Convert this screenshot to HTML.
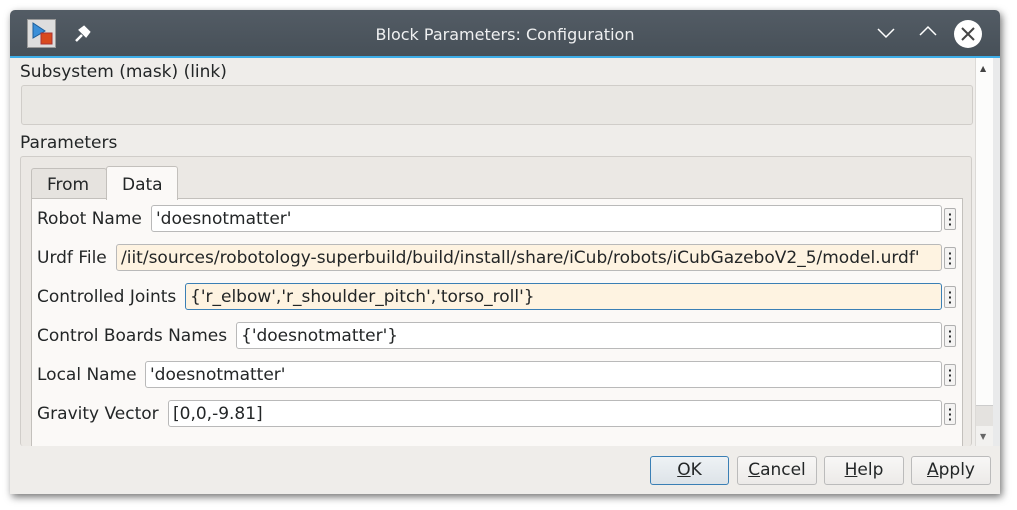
<!DOCTYPE html><html><head><style>
*{box-sizing:border-box;margin:0;padding:0}
body{width:1017px;height:510px;background:#fff;font-family:"DejaVu Sans","Liberation Sans",sans-serif;font-size:17px;color:#232627;position:relative;overflow:hidden}
.win{position:absolute;left:10px;top:10px;width:990px;height:484px;background:#efedea;border-radius:5px 5px 0 0;box-shadow:2px 3px 8px rgba(0,0,0,.55)}
.title{position:absolute;left:0;top:0;width:990px;height:48px;background:linear-gradient(#535c65,#475058);border-radius:5px 5px 0 0;border-bottom:2px solid #3daee9}
.title .t{position:absolute;left:0;width:990px;top:15px;text-align:center;color:#eff0f1;font-size:16px}
.abs{position:absolute}
.field{position:absolute;height:27px;background:#fff;border:1px solid #b9b9b9;border-radius:3px;padding:3px 0 0 4px;white-space:nowrap;overflow:hidden}
.dots{position:absolute;left:944px;width:12px;height:22px;border:1px solid #b0b0b0;border-radius:2px;background:#f4f3f2;font-weight:bold;font-size:11px;line-height:5px;text-align:center;padding-top:3px}
.lbl{position:absolute;left:37px}
.btn{position:absolute;top:456px;height:29px;border:1px solid #bbb;border-radius:3px;background:linear-gradient(#f8f7f6,#eceae8);text-align:center;padding-top:3px;font-size:17px}
</style></head><body>
<div class="win">
<div class="title">
<div class="abs" style="left:17px;top:9px;width:29px;height:29px;background:#ddd;border:1px solid #999"><svg width="27" height="27"><polygon points="5,3 17,11 5,18" fill="#3a8fd8" stroke="#1d5e9a"/><rect x="13" y="13" width="11" height="11" fill="#d94a1e" stroke="#a33"/></svg></div>
<svg class="abs" style="left:62px;top:14px" width="20" height="20"><path d="M4 17 L10 11 M8 6 L14 12 L17 8 L12 3 Z" stroke="#fff" stroke-width="2.5" fill="#fff"/></svg>
<div class="t">Block Parameters: Configuration</div>
<svg class="abs" style="left:866px;top:16px" width="20" height="14"><path d="M2 3 L10 11 L18 3" stroke="#fff" stroke-width="1.5" fill="none"/></svg>
<svg class="abs" style="left:908px;top:14px" width="20" height="14"><path d="M2 11 L10 3 L18 11" stroke="#fff" stroke-width="1.5" fill="none"/></svg>
<svg class="abs" style="left:943px;top:9px" width="30" height="30"><circle cx="15" cy="15" r="14" fill="#fff"/><path d="M9 9 L21 21 M21 9 L9 21" stroke="#444" stroke-width="2"/></svg>
</div>
</div>
<div class="lbl" style="left:20px;top:62px">Subsystem (mask) (link)</div>
<div class="abs" style="left:21px;top:85px;width:952px;height:40px;border:1px solid #d0cdc9;border-radius:3px;background:#e9e7e3"></div>
<div class="lbl" style="left:20px;top:133px">Parameters</div>
<div class="abs" style="left:20px;top:156px;width:952px;height:290px;border:1px solid #d0cdc9;border-bottom:none;border-radius:3px;background:#ebe8e4"></div>
<div class="abs" style="left:31px;top:168px;width:76px;height:31px;border:1px solid #c3c0bc;border-bottom:none;background:#e6e3df;border-radius:3px 3px 0 0;padding:6px 0 0 15px">From</div>
<div class="abs" style="left:31px;top:198px;width:932px;height:248px;border:1px solid #c3c0bc;border-bottom:none;background:#fbf9f7"></div>
<div class="abs" style="left:106px;top:166px;width:72px;height:34px;border:1px solid #c3c0bc;border-bottom:none;background:#fbf9f7;border-radius:3px 3px 0 0;padding:8px 0 0 15px">Data</div>

<div class="lbl" style="top:209px">Robot Name</div><div class="field" style="left:151px;top:205px;width:791px">'doesnotmatter'</div><div class="dots" style="top:208px">·<br>·<br>·</div>
<div class="lbl" style="top:248px">Urdf File</div><div class="field" style="left:116px;top:244px;width:826px;background:#fef3e1">/iit/sources/robotology-superbuild/build/install/share/iCub/robots/iCubGazeboV2_5/model.urdf'</div><div class="dots" style="top:247px">·<br>·<br>·</div>
<div class="lbl" style="top:287px">Controlled Joints</div><div class="field" style="left:185px;top:283px;width:757px;background:#fef3e1;border-color:#3a7fb5">{'r_elbow','r_shoulder_pitch','torso_roll'}</div><div class="dots" style="top:286px">·<br>·<br>·</div>
<div class="lbl" style="top:326px">Control Boards Names</div><div class="field" style="left:236px;top:322px;width:706px">{'doesnotmatter'}</div><div class="dots" style="top:325px">·<br>·<br>·</div>
<div class="lbl" style="top:365px">Local Name</div><div class="field" style="left:145px;top:361px;width:797px">'doesnotmatter'</div><div class="dots" style="top:364px">·<br>·<br>·</div>
<div class="lbl" style="top:404px">Gravity Vector</div><div class="field" style="left:168px;top:400px;width:774px">[0,0,-9.81]</div><div class="dots" style="top:403px">·<br>·<br>·</div>

<div class="abs" style="left:975px;top:58px;width:18px;height:388px;background:#f2f1ef;border-left:1px solid #dcdad7"></div>
<div class="abs" style="left:976px;top:58px;width:17px;height:348px;background:#fcfcfb;border-bottom:1px solid #ccc"></div>
<div class="abs" style="left:976px;top:406px;width:17px;height:20px;background:#e4e2df"></div>
<div class="abs" style="left:980px;top:64px;font-size:8px;color:#444">▲</div>
<div class="abs" style="left:980px;top:432px;font-size:8px;color:#666">▼</div>
<div class="abs" style="left:993px;top:58px;width:7px;height:388px;background:#e9eaeb"></div>

<div class="btn" style="left:650px;width:79px;border-color:#3a7fb5;background:linear-gradient(#eef2f5,#dde3e8)"><u>O</u>K</div>
<div class="btn" style="left:737px;width:80px"><u>C</u>ancel</div>
<div class="btn" style="left:824px;width:80px"><u>H</u>elp</div>
<div class="btn" style="left:911px;width:80px"><u>A</u>pply</div>
</body></html>
